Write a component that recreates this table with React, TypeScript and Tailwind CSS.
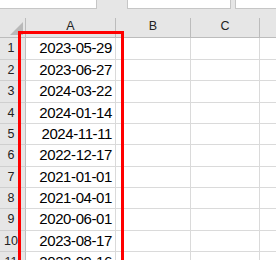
import React from 'react';

// dates in column A, one per row
const dates = [
  '2023-05-29',
  '2023-06-27',
  '2024-03-22',
  '2024-01-14',
  '2024-11-11',
  '2022-12-17',
  '2021-01-01',
  '2021-04-01',
  '2020-06-01',
  '2023-08-17',
  '2022-09-16',
];

const tallRows = [true, false, true, false, false, true, false, false, true, false, false];

const font = { fontFamily: '"Liberation Sans", Arial, sans-serif' };

const CornerCell = () => (
  <div className="w-[26px] h-full border-r border-[#bcbcbc] flex items-end justify-end pr-[2px] pb-[2px]">
    <svg width="13" height="13" viewBox="0 0 13 13">
      <polygon points="13,0 13,13 0,13" fill="#b9b9b9" />
    </svg>
  </div>
);

const Row = ({ n, value, tall }: { n: number; value: string; tall: boolean }) => (
  <div className={`flex ${tall ? 'h-[22px]' : 'h-[21px]'}`}>
    <div className="w-[26px] bg-[#e6e6e6] border-r border-b border-r-[#bcbcbc] border-b-[#cfcfcf] flex items-center justify-center pr-[3px] text-[12.5px] text-[#222]">
      {n}
    </div>
    <div className="w-[90px] border-r border-b border-[#dadada] flex items-center justify-end pr-[3px] text-[15px] tracking-[-0.4px] text-black">
      {value}
    </div>
    <div className="w-[75px] border-r border-b border-[#dadada]" />
    <div className="w-[69px] border-r border-b border-[#dadada]" />
    <div className="flex-1 border-b border-[#dadada]" />
  </div>
);

export default function App() {
  return (
    <div className="relative w-[276px] h-[260px] overflow-hidden bg-white" style={font}>
      {/* name box and formula bar */}
      <div className="h-[18px] bg-[#e6e6e6]">
        <div className="flex h-[9px]">
          <div className="w-[97px] bg-white border-r border-b border-[#c6c6c6]" />
          <div className="w-[30px]" />
          <div className="w-[104px] bg-white border-r border-l border-b border-[#c6c6c6]" />
          <div className="w-[4px]" />
          <div className="flex-1 bg-white border-l border-b border-[#c6c6c6]" />
        </div>
      </div>

      {/* column headers */}
      <div className="flex h-[20px] bg-[#e6e6e6] border-b border-[#bcbcbc] text-[12.5px] text-[#222]">
        <CornerCell />
        <div className="w-[90px] border-r border-[#bcbcbc] flex items-center justify-center pb-[2px]">A</div>
        <div className="w-[75px] border-r border-[#bcbcbc] flex items-center justify-center pb-[2px]">B</div>
        <div className="w-[69px] border-r border-[#bcbcbc] flex items-center justify-center pb-[2px]">C</div>
        <div className="flex-1" />
      </div>

      {dates.map((d, i) => (
        <Row key={i} n={i + 1} value={d} tall={tallRows[i]} />
      ))}

      {/* selection highlight around column A */}
      <div className="absolute left-[18px] top-[31px] w-[106px] h-[260px] border-[3px] border-[#ff0000]" />
    </div>
  );
}
